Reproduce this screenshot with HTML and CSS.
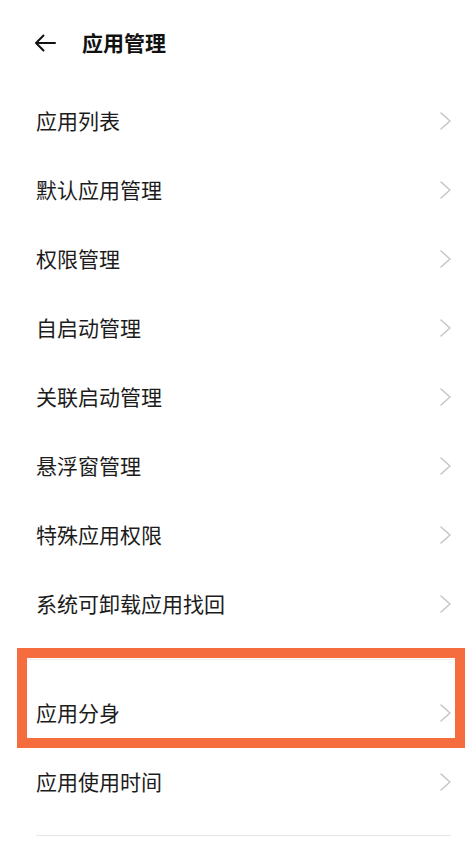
FILE: index.html
```html
<!DOCTYPE html>
<html lang="zh-CN">
<head>
    <meta charset="UTF-8">
    <meta name="viewport" content="width=device-width, initial-scale=1.0">
    <title>应用管理</title>
    <link rel="stylesheet" href="styles.css">
</head>
<body>
    <div class="page">
        <header class="top-bar">
            <svg class="back" width="22" height="18" viewBox="0 0 22 18">
                <path d="M21 9H2M9.5 1.5L2 9l7.5 7.5" fill="none" stroke="#111" stroke-width="2" stroke-linecap="round" stroke-linejoin="round"/>
            </svg>
            <h1>应用管理</h1>
        </header>

        <ul class="menu">
            <li class="row"><span>应用列表</span><i class="chev"></i></li>
            <li class="row"><span>默认应用管理</span><i class="chev"></i></li>
            <li class="row"><span>权限管理</span><i class="chev"></i></li>
            <li class="row"><span>自启动管理</span><i class="chev"></i></li>
            <li class="row"><span>关联启动管理</span><i class="chev"></i></li>
            <li class="row"><span>悬浮窗管理</span><i class="chev"></i></li>
            <li class="row"><span>特殊应用权限</span><i class="chev"></i></li>
            <li class="row"><span>系统可卸载应用找回</span><i class="chev"></i></li>
        </ul>

        <div class="section-gap"></div>

        <ul class="menu">
            <li class="row"><span>应用分身</span><i class="chev"></i></li>
            <li class="row"><span>应用使用时间</span><i class="chev"></i></li>
        </ul>

        <div class="divider"></div>

        <!-- highlight box drawn over the list -->
        <div class="highlight"></div>
    </div>

    <script>
        document.querySelectorAll('.chev').forEach(function (el) {
            el.innerHTML = '<svg width="11" height="18" viewBox="0 0 11 18"><path d="M1 1l9 8-9 8" fill="none" stroke="#c6c6c6" stroke-width="1.5" stroke-linecap="round" stroke-linejoin="round"/></svg>';
        });
    </script>
</body>
</html>
```

FILE: styles.css
```css
* {
    margin: 0;
    padding: 0;
    box-sizing: border-box;
    font-family: 'Noto Sans CJK SC', 'Noto Sans', sans-serif;
}
body {
    background: #fff;
    color: #1c1c1c;
}
.page {
    position: relative;
    width: 472px;
    min-height: 846px;
    overflow: hidden;
}
.top-bar {
    height: 88px;
    display: flex;
    align-items: center;
    padding-left: 34px;
    padding-bottom: 3px;
}
.back {
    display: block;
    margin-right: 26px;
    margin-top: 1px;
}
h1 {
    font-size: 21px;
    font-weight: 700;
    color: #111;
    line-height: 1.2;
}
.menu {
    list-style: none;
}
.row {
    height: 69px;
    display: flex;
    align-items: center;
    justify-content: space-between;
    padding: 0 21px 4px 36px;
    font-size: 21px;
    line-height: 1.2;
}
.chev {
    display: block;
    width: 11px;
    height: 18px;
}
.chev svg {
    display: block;
}
.section-gap {
    height: 40px;
    padding-top: 19px;
    margin: 0 17px;
}
.section-gap::after {
    content: "";
    display: block;
    height: 1px;
    background: #efebe7;
}
.divider {
    height: 1px;
    background: #e6e6e6;
    margin: 17px 21px 0 36px;
}
.highlight {
    position: absolute;
    left: 17px;
    top: 648px;
    width: 448px;
    height: 100px;
    border: 10px solid #f56c3e;
}
```
